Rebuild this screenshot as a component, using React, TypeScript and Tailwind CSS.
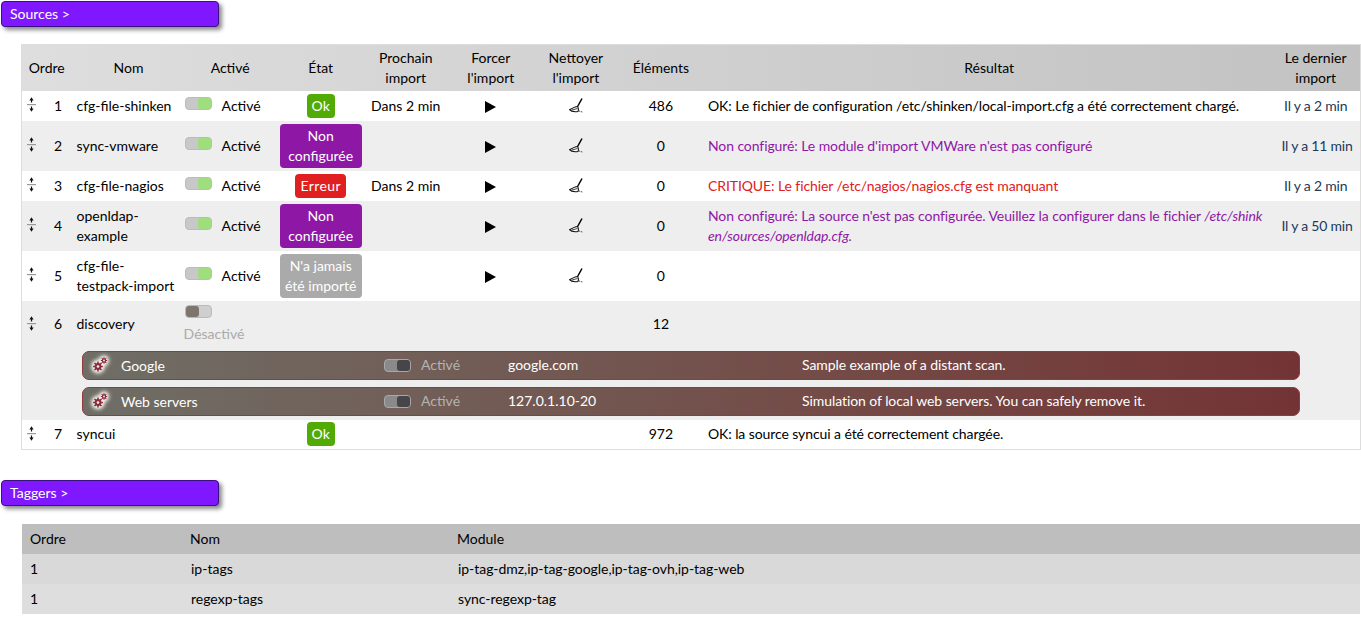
import React from "react";

const Grip = () => (
  <svg width="9" height="15" viewBox="0 0 9 15" className="block">
    <path d="M4.5 0.2 L6.6 3.6 H5.1 V5.6 H3.9 V3.6 H2.4 Z" fill="#111" />
    <rect x="0" y="7" width="9" height="1.2" fill="#999" />
    <path d="M4.5 14.8 L2.4 11.4 H3.9 V9.6 H5.1 V11.4 H6.6 Z" fill="#111" />
  </svg>
);

const Play = () => (
  <svg width="11" height="12" viewBox="0 0 11 12" className="inline-block align-middle">
    <path d="M0 0 L11 6 L0 12 Z" fill="#000" />
  </svg>
);

const Broom = () => (
  <svg width="14" height="15" viewBox="0 0 14 15" className="inline-block align-middle -mt-[3px]">
    <path d="M13 0.5 L8.3 9" stroke="#000" strokeWidth="1.5" fill="none" />
    <path d="M8.5 8.5 C6.5 8.5 3 10.5 0.5 11.7 C2 13.5 5.5 14 9 13.5 C9.5 12 9.7 10 8.5 8.5 Z" fill="#fff" stroke="#111" strokeWidth="1.1" />
    <path d="M3 12 L8.5 10.5" stroke="#333" strokeWidth="0.9" />
    <path d="M10.5 12.5 L11 14 M12.5 13 L13 14.5" stroke="#555" strokeWidth="0.9" />
  </svg>
);

const Gears = () => (
  <svg width="20" height="20" viewBox="0 0 20 20" className="[filter:drop-shadow(0_0_2px_#f6f6f0)_drop-shadow(0_0_2px_#f6f6f0)_drop-shadow(0_0_1px_#f6f6f0)]">
    <g fill="#8f2b3c">
      <circle cx="8" cy="11.5" r="3.4" />
      <g stroke="#8f2b3c" strokeWidth="1.6">
        <path d="M8 6.6V16.4M3.1 11.5H12.9M4.5 8L11.5 15M11.5 8L4.5 15" />
      </g>
      <circle cx="14" cy="5.5" r="2.2" />
      <g stroke="#8f2b3c" strokeWidth="1.1">
        <path d="M14 2.3V8.7M10.8 5.5H17.2M11.7 3.2L16.3 7.8M16.3 3.2L11.7 7.8" />
      </g>
    </g>
    <circle cx="8" cy="11.5" r="1.3" fill="#f2f2ee" />
    <circle cx="14" cy="5.5" r="0.9" fill="#f2f2ee" />
  </svg>
);

const Toggle = ({ kind }: { kind: "on" | "off" | "sub" }) => {
  if (kind === "on")
    return (
      <span className="inline-flex justify-end w-[27px] h-[13px] rounded-[4px] bg-[#c8c8c8] border border-[#bbbbbb] align-middle -translate-y-[3px]">
        <span className="w-[13px] h-full rounded-[3px] bg-[#9fde7c]" />
      </span>
    );
  if (kind === "off")
    return (
      <span className="inline-flex justify-start w-[27px] h-[13px] rounded-[4px] bg-[#cfcfcf] border border-[#bbbbbb] align-middle">
        <span className="w-[13px] h-full rounded-[3px] bg-[#7d766f]" />
      </span>
    );
  return (
    <span className="inline-flex justify-end w-[27px] h-[13px] rounded-[4px] bg-[#8a8a8a] border border-[#a8a8a8] align-middle">
      <span className="w-[13px] h-full rounded-[3px] bg-[#45454a]" />
    </span>
  );
};

const Badge = ({ color, children }: { color: string; children: React.ReactNode }) => (
  <span className={`inline-block rounded-[4px] py-[2px] text-white leading-[20px] align-middle ${color}`}>{children}</span>
);

const Title = ({ children }: { children: React.ReactNode }) => (
  <div className="w-[218px] h-[26px] ml-[1px] rounded-[4px] bg-[#7f18ff] border border-[#3b0f80] shadow-[3px_3px_4px_#8a8a8a] text-white pl-[8px] leading-[24px]">
    {children}
  </div>
);

type Row = {
  n: number;
  name: React.ReactNode;
  badge?: React.ReactNode;
  next?: string;
  actions?: boolean;
  count?: string;
  result?: React.ReactNode;
  last?: string;
  h: string;
  bg: string;
};

const rows: Row[] = [
  { n: 1, name: "cfg-file-shinken", badge: <Badge color="bg-[#52ab05] px-[5px]">Ok</Badge>, next: "Dans 2 min", actions: true, count: "486", result: "OK: Le fichier de configuration /etc/shinken/local-import.cfg a été correctement chargé.", last: "Il y a 2 min", h: "h-[30px]", bg: "bg-white" },
  { n: 2, name: "sync-vmware", badge: <Badge color="bg-[#8e17a6] w-[82px]">Non<br />configurée</Badge>, actions: true, count: "0", result: <span className="text-[#8e17a6]">Non configuré: Le module d'import VMWare n'est pas configuré</span>, last: "Il y a 11 min", h: "h-[50px]", bg: "bg-[#eeeeee]" },
  { n: 3, name: "cfg-file-nagios", badge: <Badge color="bg-[#e02020] px-[5px] tracking-[0.4px]">Erreur</Badge>, next: "Dans 2 min", actions: true, count: "0", result: <span className="text-[#e02020]">CRITIQUE: Le fichier /etc/nagios/nagios.cfg est manquant</span>, last: "Il y a 2 min", h: "h-[30px]", bg: "bg-white" },
  { n: 4, name: <>openldap-<br />example</>, badge: <Badge color="bg-[#8e17a6] w-[82px]">Non<br />configurée</Badge>, actions: true, count: "0", result: <span className="text-[#8e17a6]">Non configuré: La source n'est pas configurée. Veuillez la configurer dans le fichier <i>/etc/shink<br />en/sources/openldap.cfg.</i></span>, last: "Il y a 50 min", h: "h-[50px]", bg: "bg-[#eeeeee]" },
  { n: 5, name: <>cfg-file-<br />testpack-import</>, badge: <Badge color="bg-[#aaaaaa] w-[82px]">N'a jamais<br />été importé</Badge>, actions: true, count: "0", h: "h-[50px]", bg: "bg-white" },
];

const headers: [React.ReactNode, string][] = [
  ["Ordre", "text-center"],
  ["Nom", "text-center pl-[6px]"],
  ["Activé", "text-center pl-[6px]"],
  ["État", "text-center"],
  [<>Prochain<br />import</>, "text-center"],
  [<>Forcer<br />l'import</>, "text-center"],
  [<>Nettoyer<br />l'import</>, "text-center"],
  ["Éléments", "text-center"],
  ["Résultat", "text-center pr-[10px]"],
  [<>Le dernier<br />import</>, "text-center pr-[10px]"],
];

const Order = ({ n }: { n: number }) => (
  <td className="p-0">
    <div className="flex items-center">
      <span className="ml-[5px] w-[9px] -mt-[2px]"><Grip /></span>
      <span className="ml-[18px]">{n}</span>
    </div>
  </td>
);

const Sub = ({ name, addr, desc }: { name: string; addr: string; desc: string }) => (
  <div className="ml-[60px] w-[1218px] h-[29px] rounded-[7px] border border-[#8f3b3f] bg-gradient-to-r from-[#6e6e66] to-[#733334] flex items-center text-white">
    <span className="ml-[7px] w-[20px] flex"><Gears /></span>
    <span className="ml-[11px] w-[263px] mt-[1px]">{name}</span>
    <span className="w-[37px] flex"><Toggle kind="sub" /></span>
    <span className="w-[87px] text-[#b4b4b0] -mt-[1px]">Activé</span>
    <span className="w-[294px] -mt-[1px]">{addr}</span>
    <span className="-mt-[1px] tracking-[-0.07px]">{desc}</span>
  </div>
);

export default function App() {
  return (
    <div className="font-['Lato','Liberation_Sans',sans-serif] text-[14px] leading-[20px] text-black bg-white w-[1361px] h-[617px] overflow-hidden pt-[1px]">
      <Title>Sources &gt;</Title>
      <div className="ml-[21px] mt-[17px] w-[1340px]">
        <table className="w-full table-fixed border-collapse border border-[#dddddd]">
          <colgroup>
            <col className="w-[50px]" />
            <col className="w-[108px]" />
            <col className="w-[95px]" />
            <col className="w-[92px]" />
            <col className="w-[78px]" />
            <col className="w-[92px]" />
            <col className="w-[78px]" />
            <col className="w-[92px]" />
            <col className="w-[574px]" />
            <col className="w-[79px]" />
          </colgroup>
          <thead>
            <tr className="h-[46px] bg-gradient-to-r from-[#dedede] to-[#c2c2c2]">
              {headers.map(([t, c], i) => (
                <th key={i} className={`font-normal p-0 ${c}`}>{t}</th>
              ))}
            </tr>
          </thead>
          <tbody>
            {rows.map((r) => (
              <tr key={r.n} className={`${r.h} ${r.bg}`}>
                <Order n={r.n} />
                <td className="p-0 pl-[5px]">{r.name}</td>
                <td className="p-0 pl-[5px] whitespace-nowrap">
                  <span className="inline-block w-[37px]"><Toggle kind="on" /></span>Activé
                </td>
                <td className="p-0 text-center">{r.badge}</td>
                <td className="p-0 text-center">{r.next}</td>
                <td className="p-0 text-center">{r.actions && <Play />}</td>
                <td className="p-0 text-center">{r.actions && <Broom />}</td>
                <td className="p-0 text-center">{r.count}</td>
                <td className="p-0 pl-[1px] tracking-[-0.09px]">{r.result}</td>
                <td className="p-0 pr-[10px] text-center whitespace-nowrap text-[#1a3a5a] tracking-[-0.2px]">{r.last}</td>
              </tr>
            ))}
            <tr className="h-[47px] bg-[#eeeeee]">
              <Order n={6} />
              <td className="p-0 pl-[5px]">discovery</td>
              <td className="p-0 pl-[4px] text-[#aaaaaa]">
                <div className="flex flex-col items-start">
                  <span className="ml-[1px] flex"><Toggle kind="off" /></span>
                  <span className="mt-[6px]">Désactivé</span>
                </div>
              </td>
              <td className="p-0" />
              <td className="p-0" />
              <td className="p-0" />
              <td className="p-0" />
              <td className="p-0 text-center">12</td>
              <td className="p-0" />
              <td className="p-0" />
            </tr>
            <tr className="bg-[#eeeeee]">
              <td colSpan={10} className="p-0 pb-[4px] pt-[3px]">
                <div className="flex flex-col gap-[7px]">
                  <Sub name="Google" addr="google.com" desc="Sample example of a distant scan." />
                  <Sub name="Web servers" addr="127.0.1.10-20" desc="Simulation of local web servers. You can safely remove it." />
                </div>
              </td>
            </tr>
            <tr className="h-[30px] bg-white">
              <Order n={7} />
              <td className="p-0 pl-[5px]">syncui</td>
              <td className="p-0" />
              <td className="p-0 text-center"><Badge color="bg-[#52ab05] px-[5px]">Ok</Badge></td>
              <td className="p-0" />
              <td className="p-0" />
              <td className="p-0" />
              <td className="p-0 text-center">972</td>
              <td className="p-0 pl-[1px] tracking-[-0.09px]">OK: la source syncui a été correctement chargée.</td>
              <td className="p-0" />
            </tr>
          </tbody>
        </table>
      </div>

      <div className="mt-[30px]">
        <Title>Taggers &gt;</Title>
      </div>
      <div className="ml-[22px] mt-[18px] w-[1338px]">
        <table className="w-full table-fixed border-collapse">
          <colgroup>
            <col className="w-[160px]" />
            <col className="w-[267px]" />
            <col />
          </colgroup>
          <thead>
            <tr className="h-[30px] bg-[#bebebe]">
              <th className="font-normal text-left p-0 pl-[8px]">Ordre</th>
              <th className="font-normal text-left p-0 pl-[8px]">Nom</th>
              <th className="font-normal text-left p-0 pl-[8px]">Module</th>
            </tr>
          </thead>
          <tbody>
            <tr className="h-[30px] bg-[#d9d9d9]">
              <td className="p-0 pl-[8px]">1</td>
              <td className="p-0 pl-[9px]">ip-tags</td>
              <td className="p-0 pl-[9px] tracking-[-0.05px]">ip-tag-dmz,ip-tag-google,ip-tag-ovh,ip-tag-web</td>
            </tr>
            <tr className="h-[30px] bg-[#dedede]">
              <td className="p-0 pl-[8px]">1</td>
              <td className="p-0 pl-[9px]">regexp-tags</td>
              <td className="p-0 pl-[9px] tracking-[-0.05px]">sync-regexp-tag</td>
            </tr>
          </tbody>
        </table>
      </div>
    </div>
  );
}
